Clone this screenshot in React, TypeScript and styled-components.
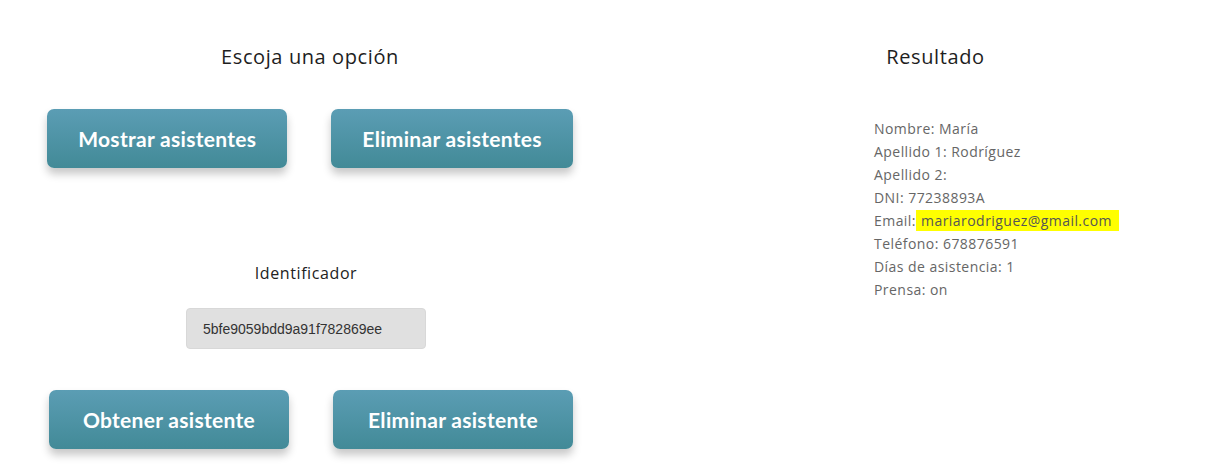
import React from "react";
import styled, { createGlobalStyle } from "styled-components";

const Global = createGlobalStyle`
  html, body { margin: 0; padding: 0; background: #ffffff; }
  body { font-family: "Open Sans", "Noto Sans", sans-serif; }
`;

const Page = styled.div`
  display: grid;
  grid-template-columns: 620px 1fr;
  width: 1219px;
  height: 470px;
  overflow: hidden;
`;

const LeftColumn = styled.section`
  display: flex;
  flex-direction: column;
  align-items: center;
  padding-top: 44px;
`;

const RightColumn = styled.section`
  display: flex;
  flex-direction: column;
  padding-top: 44px;
  padding-left: 32px;
`;

const Heading = styled.h2`
  margin: 0;
  font-family: "Open Sans", sans-serif;
  font-weight: 400;
  font-size: 20px;
  line-height: 26px;
  color: #1e1e1e;
  text-align: center;
  letter-spacing: 0.6px;
`;

const ButtonRow = styled.div<{ $top: number; $shift?: number }>`
  display: flex;
  gap: 44px;
  margin-top: ${(p) => p.$top}px;
  transform: translateX(${(p) => p.$shift ?? 0}px);
`;

const ActionButton = styled.button`
  min-width: 240px;
  height: 59px;
  padding: 0 31px;
  border: none;
  border-radius: 7px;
  background: linear-gradient(#5b9db4, #428a97);
  color: #ffffff;
  font-family: "Lato", "DejaVu Sans", sans-serif;
  font-weight: 700;
  font-size: 21px;
  letter-spacing: 0.3px;
  box-shadow: 0 6px 8px rgba(0, 0, 0, 0.22);
  cursor: pointer;
`;

const Label = styled.div`
  margin-top: 95px;
  font-family: "Open Sans", sans-serif;
  font-size: 16px;
  line-height: 20px;
  letter-spacing: 0.6px;
  color: #222222;
  transform: translateX(-4px);
`;

const IdInput = styled.input`
  margin-top: 25px;
  width: 240px;
  height: 41px;
  box-sizing: border-box;
  padding: 0 16px;
  border: 1px solid #d8d8d8;
  border-radius: 4px;
  background: #e0e0e0;
  font-family: "Liberation Sans", Arial, sans-serif;
  font-size: 14px;
  color: #333333;
  transform: translateX(-4px);
`;

const ResultList = styled.ul`
  list-style: none;
  margin: 47px 0 0 222px;
  padding: 0;
  display: flex;
  flex-direction: column;
`;

const ResultItem = styled.li`
  font-family: "Open Sans", sans-serif;
  font-size: 14px;
  line-height: 23px;
  letter-spacing: 0.45px;
  color: #666666;
  white-space: nowrap;
`;

const Highlight = styled.span`
  background: #ffff00;
  color: #555555;
  padding: 1px 7px 1px 1px;
`;

export default function App() {
  return (
    <>
      <Global />
      <Page>
        <LeftColumn>
          <Heading>Escoja una opción</Heading>
          <ButtonRow $top={39}>
            <ActionButton>Mostrar asistentes</ActionButton>
            <ActionButton>Eliminar asistentes</ActionButton>
          </ButtonRow>
          <Label>Identificador</Label>
          <IdInput defaultValue="5bfe9059bdd9a91f782869ee" />
          <ButtonRow $top={41} $shift={1}>
            <ActionButton>Obtener asistente</ActionButton>
            <ActionButton>Eliminar asistente</ActionButton>
          </ButtonRow>
        </LeftColumn>
        <RightColumn>
          <Heading>Resultado</Heading>
          <ResultList>
            <ResultItem>Nombre: María</ResultItem>
            <ResultItem>Apellido 1: Rodríguez</ResultItem>
            <ResultItem>Apellido 2:</ResultItem>
            <ResultItem>DNI: 77238893A</ResultItem>
            <ResultItem>
              Email:<Highlight> mariarodriguez@gmail.com</Highlight>
            </ResultItem>
            <ResultItem>Teléfono: 678876591</ResultItem>
            <ResultItem>Días de asistencia: 1</ResultItem>
            <ResultItem>Prensa: on</ResultItem>
          </ResultList>
        </RightColumn>
      </Page>
    </>
  );
}
